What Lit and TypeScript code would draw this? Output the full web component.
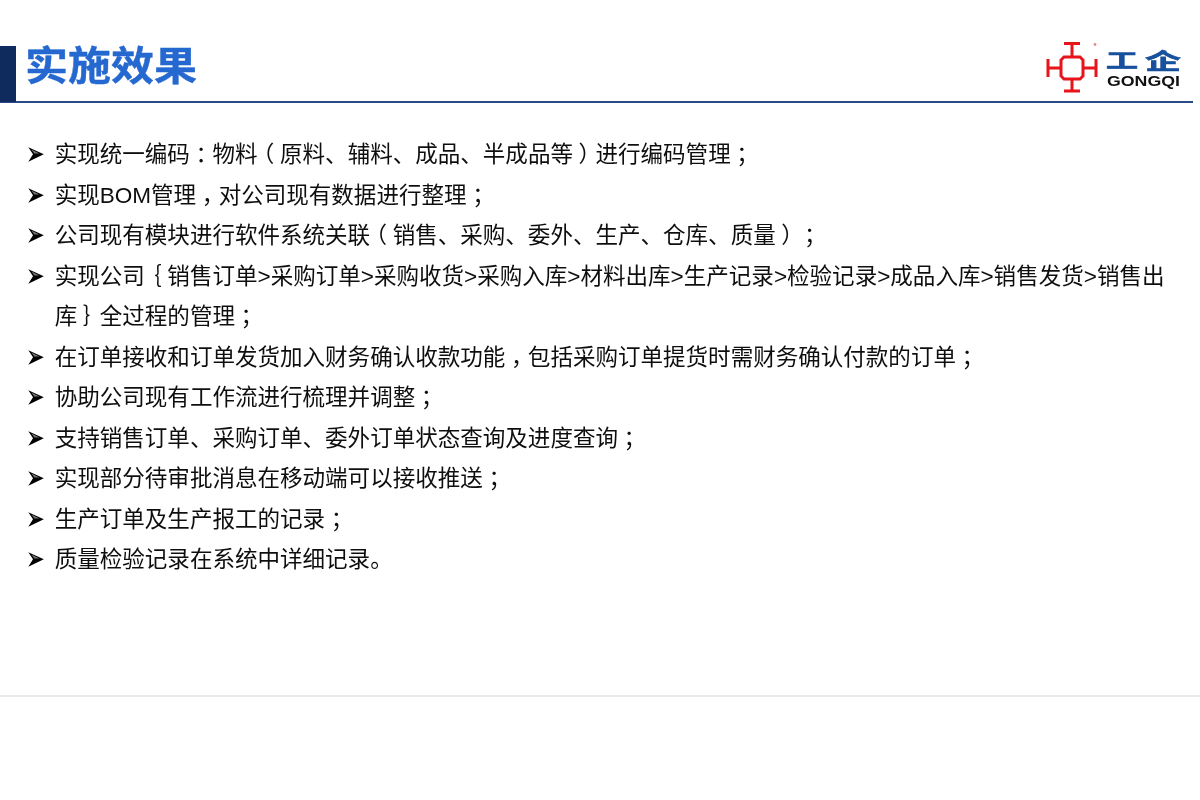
import { LitElement, html, css, svg } from "lit";
import { customElement } from "lit/decorators.js";

const ITEMS = [
  "实现统一编码：物料（原料、辅料、成品、半成品等）进行编码管理；",
  "实现BOM管理，对公司现有数据进行整理；",
  "公司现有模块进行软件系统关联（销售、采购、委外、生产、仓库、质量）；",
  "实现公司｛销售订单>采购订单>采购收货>采购入库>材料出库>生产记录>检验记录>成品入库>销售发货>销售出库｝全过程的管理；",
  "在订单接收和订单发货加入财务确认收款功能，包括采购订单提货时需财务确认付款的订单；",
  "协助公司现有工作流进行梳理并调整；",
  "支持销售订单、采购订单、委外订单状态查询及进度查询；",
  "实现部分待审批消息在移动端可以接收推送；",
  "生产订单及生产报工的记录；",
  "质量检验记录在系统中详细记录。",
];

function punct(text: string) {
  return text.split(/([（）｛｝，：；])/).map((part) =>
    /^[（）｛｝，：；]$/.test(part) ? html`<span class="fw">${part}</span>` : part
  );
}

const bullet = svg`<svg class="arrow" viewBox="0 0 16 15" width="16" height="15" aria-hidden="true">
  <path d="M0.3 0.3 L15.8 7.2 L0.3 14.7 L5 7.2 Z" fill="#000"/>
  <path d="M3.4 2.6 L11.5 6.6 L6.4 6.6 Z" fill="#fff" opacity="0.45"/>
</svg>`;

const logo = html`<svg class="logo" viewBox="0 0 136 56" width="136" height="56" role="img" aria-label="工企 GONGQI">
  <g fill="none" stroke="#e8141c" stroke-width="3">
    <path d="M18 1.5 H34 M26 1.5 V15 M18 49 H34 M26 49 V37"/>
    <path d="M2 17 V35 M2 26 H15 M50 17 V35 M50 26 H37"/>
    <path d="M18 15 H34 L37 18 V34 L34 37 H18 L15 34 V18 Z"/>
  </g>
  <circle cx="49" cy="2.5" r="1.4" fill="#e58a8a"/>
  <text x="60" y="26" class="cn gong" textLength="32" lengthAdjust="spacingAndGlyphs">工</text>
  <text x="99" y="27" class="cn qi" textLength="36" lengthAdjust="spacingAndGlyphs">企</text>
  <text x="61" y="44" class="en" textLength="73" lengthAdjust="spacingAndGlyphs">GONGQI</text>
</svg>`;

@customElement("app-root")
export class AppRoot extends LitElement {
  static styles = css`
    :host {
      display: block;
      width: 1200px;
      height: 800px;
      background: #fff;
      font-family: "Liberation Sans", "Noto Sans CJK SC", sans-serif;
      color: #0e0e0e;
      overflow: hidden;
    }
    .slide {
      height: 697px;
      box-sizing: border-box;
      border-bottom: 2px solid #ebebeb;
      display: flex;
      flex-direction: column;
      padding-top: 42px;
      filter: blur(0.35px);
    }
    .header {
      display: flex;
      align-items: stretch;
      height: 61px;
      margin-right: 7px;
      border-bottom: 2px solid #2a4a86;
      box-sizing: border-box;
    }
    .mark {
      width: 16px;
      margin-top: 4px;
      margin-bottom: -1px;
      background: #0f2a5c;
      flex: none;
    }
    h1 {
      margin: 0 0 0 9px;
      flex: 1;
      align-self: flex-start;
      font-size: 43px;
      line-height: 40px;
      font-weight: 700;
      color: #2468d0;
      font-family: "Noto Sans CJK SC", sans-serif;
      transform: scaleY(0.92);
      transform-origin: 0 24px;
      -webkit-text-stroke: 0.4px #2468d0;
    }
    .logo {
      flex: none;
      margin-right: 11px;
    }
    .logo .cn {
      font-family: "Noto Sans CJK SC", sans-serif;
      font-weight: 700;
      fill: #17509c;
      stroke: #17509c;
      stroke-width: 0.7px;
    }
    .logo .gong {
      font-size: 20px;
    }
    .logo .qi {
      font-size: 22px;
    }
    .logo .en {
      font: 700 14px "Liberation Sans", sans-serif;
      fill: #111;
    }
    ul {
      list-style: none;
      margin: 32px 0 0;
      padding: 0 30px 0 28px;
      font-size: 22.54px;
      line-height: 40.5px;
    }
    li {
      display: grid;
      grid-template-columns: 26.7px 1fr;
    }
    .arrow {
      margin-top: 12px;
    }
    .fw {
      display: inline-block;
      width: 1em;
      text-align: center;
      font-feature-settings: "halt";
    }
  `;

  render() {
    return html`
      <div class="slide">
        <div class="header">
          <div class="mark"></div>
          <h1>实施效果</h1>
          ${logo}
        </div>
        <ul>
          ${ITEMS.map((t) => html`<li>${bullet}<span>${punct(t)}</span></li>`)}
        </ul>
      </div>
    `;
  }
}
